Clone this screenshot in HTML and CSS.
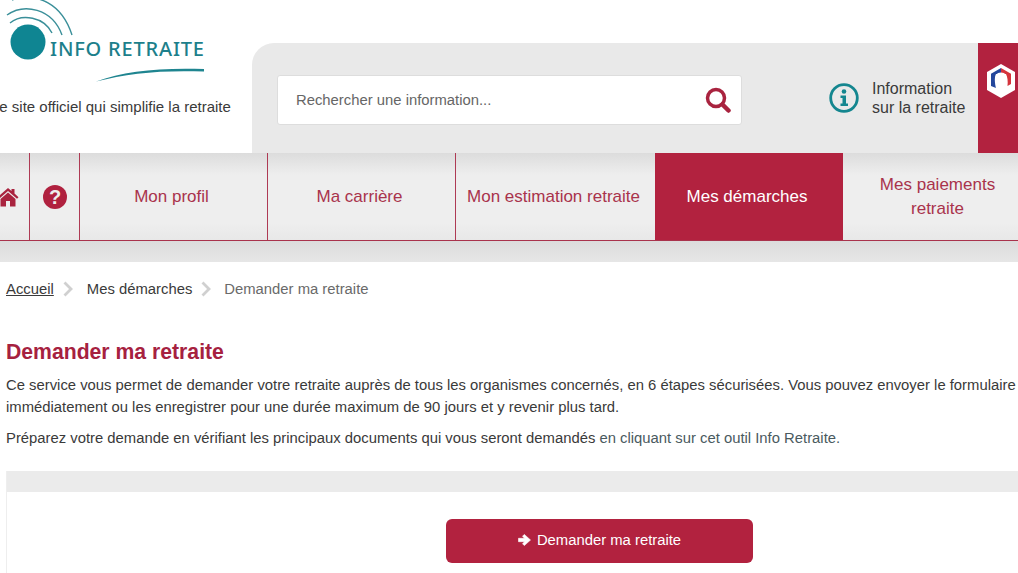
FILE: index.html
```html
<!DOCTYPE html>
<html lang="fr">
<head>
  <meta charset="UTF-8" />
  <meta name="viewport" content="width=device-width, initial-scale=1.0" />
  <title>Demander ma retraite</title>
  <link rel="stylesheet" href="styles.css">
</head>
<body>
  <header class="top">
    <div class="brand">
      <svg class="logo" width="210" height="86" viewBox="0 0 210 86">
        <circle cx="28" cy="42" r="17.500" fill="#0f8592"/>
        <path d="M10 23C22 13 44 17 52 33" fill="none" stroke="#3a8f99" stroke-width="1.400"/>
        <path d="M7 15C24 3 52 8 62 35" fill="none" stroke="#3a8f99" stroke-width="1.400"/>
        <path d="M12 0C38 -8 62 4 72 35" fill="none" stroke="#3a8f99" stroke-width="1.400"/>
        <text class="logo-text" x="50" y="56" textLength="154">INFO RETRAITE</text>
        <path d="M96 81.500C124 71 160 67.500 204 69L204 71.500C162 70 128 73 96 81.500Z" fill="#1f8590"/>
      </svg>
      <p class="tagline">Le site officiel qui simplifie la retraite</p>
    </div>
    <div class="panel">
      <div class="search">
        <span class="search-hint">Rechercher une information...</span>
        <svg width="26" height="26" viewBox="0 0 26 26">
          <circle cx="11" cy="11" r="8.500" fill="none" stroke="#a9233f" stroke-width="3.500"/>
          <path d="M17.500 17.500L23.500 23.500" stroke="#a9233f" stroke-width="4.500" stroke-linecap="round"/>
        </svg>
      </div>
      <div class="info">
        <svg width="30" height="30" viewBox="0 0 30 30">
          <circle cx="15" cy="15" r="13.300" fill="none" stroke="#14868f" stroke-width="2.800"/>
          <circle cx="15" cy="8.500" r="2.300" fill="#14868f"/>
          <path d="M11.500 12.500H17V20.500H19V23H11.500V20.500H13.500V15H11.500Z" fill="#14868f"/>
        </svg>
        <span>Information<br>sur la retraite</span>
      </div>
      <div class="account">
        <svg width="30" height="34" viewBox="0 0 30 34">
          <path d="M15 0L29 8V26L15 34L1 26V8Z" fill="#fff"/>
          <path d="M15 4L5 9.700V22L10 24C9 20 8 14 10 10H15Z" fill="#24479c"/>
          <path d="M15 4L25 9.700V20L21.500 22C22 17 21.500 13 20 10H15Z" fill="#d5343c"/>
          <path d="M15 8.500C19.500 8.500 21 12 20.500 16.500C20 19.500 18.500 21 19 23L22 25L15 29L8 25L11 23C11.500 21 10 19.500 9.500 16.500C9 12 10.500 8.500 15 8.500Z" fill="#fff"/>
        </svg>
      </div>
    </div>
  </header>

  <nav class="nav">
    <a class="nav-item nav-home">
      <svg width="22" height="20" viewBox="0 0 22 20">
        <path d="M11 1L14.500 4V2H17.500V6.600L21.500 10.200L20 11.800L11 4L2 11.800L.5 10.200Z" fill="#a9233f"/>
        <path d="M11 5.500L18.500 12V19.500H13V14H9V19.500H3.500V12Z" fill="#a9233f"/>
      </svg>
    </a>
    <a class="nav-item nav-help">
      <svg width="24" height="24" viewBox="0 0 24 24">
        <circle cx="12" cy="12" r="12" fill="#b0213f"/>
        <text class="help-mark" x="12" y="19">?</text>
      </svg>
    </a>
    <a class="nav-item nav-wide">Mon profil</a>
    <a class="nav-item nav-wide">Ma carrière</a>
    <a class="nav-item nav-estim">Mon estimation retraite</a>
    <a class="nav-item nav-wide active">Mes démarches</a>
    <a class="nav-item nav-pay">Mes paiements<br>retraite</a>
  </nav>
  <div class="strip"></div>

  <main class="content">
    <div class="crumbs">
      <a class="crumb-home">Accueil</a>
      <svg class="chev" width="12" height="16" viewBox="0 0 12 16"><path d="M2.500 1.500L9 8L2.500 14.500" fill="none" stroke="#d0d0d0" stroke-width="2.800"/></svg>
      <span class="crumb-mid">Mes démarches</span>
      <svg class="chev" width="12" height="16" viewBox="0 0 12 16"><path d="M2.500 1.500L9 8L2.500 14.500" fill="none" stroke="#d0d0d0" stroke-width="2.800"/></svg>
      <span class="crumb-last">Demander ma retraite</span>
    </div>

    <h1>Demander ma retraite</h1>
    <p class="intro">Ce service vous permet de demander votre retraite auprès de tous les organismes concernés, en 6 étapes sécurisées. Vous pouvez envoyer le formulaire immédiatement ou les enregistrer pour une durée maximum de 90 jours et y revenir plus tard.</p>
    <p class="intro second">Préparez votre demande en vérifiant les principaux documents qui vous seront demandés <a class="tool-link">en cliquant sur cet outil Info Retraite.</a></p>

    <section class="box">
      <div class="box-head"></div>
      <div class="box-body">
        <a class="btn">
          <svg width="14" height="14" viewBox="0 0 14 14"><path d="M.5 5.300H6.500L4.500 3.200L6.300 1.400L12.500 7L6.300 12.600L4.500 10.800L6.500 8.700H.5Z" fill="#fff" stroke="#fff" stroke-width=".6"/></svg>
          Demander ma retraite
        </a>
      </div>
    </section>
  </main>
</body>
</html>
```

FILE: styles.css
```css
html, body {
  height: 100%;
}
body {
  margin: 0;
  overflow: hidden;
  background: #fff;
  font-family: "Liberation Sans", Arial, sans-serif;
  font-size: 14.83px;
  color: #3a3a3a;
}
.top {
  display: flex;
  height: 153px;
}
.brand {
  width: 252px;
  flex: none;
}
.logo {
  display: block;
}
.logo-text {
  font-family: "Noto Sans", sans-serif;
  font-size: 20px;
  font-weight: 500;
  fill: #1d7f8b;
}
.tagline {
  margin: 12px 0 0 -9px;
  white-space: nowrap;
  font-size: 15px;
  line-height: 18px;
}
.panel {
  flex: 1;
  margin-top: 43px;
  display: flex;
  align-items: center;
  background: #e9e9e9;
  border-top-left-radius: 22px;
  padding-left: 25px;
}
.search {
  width: 465px;
  height: 50px;
  box-sizing: border-box;
  display: flex;
  align-items: center;
  justify-content: space-between;
  padding: 0 10px 0 18px;
  background: #fff;
  border: 1px solid #ddd;
  border-radius: 3px;
  margin-top: 4px;
}
.search-hint {
  color: #666;
}
.info {
  display: flex;
  align-items: center;
  gap: 13px;
  margin-left: 87px;
  width: 149px;
  flex: none;
  font-size: 16px;
  line-height: 19px;
}
.account {
  width: 40px;
  height: 100%;
  flex: none;
  background: #b2223f;
  box-sizing: border-box;
  padding: 21px 0 0 8px;
}
.nav {
  display: flex;
  height: 88px;
  margin-left: -20px;
  background: linear-gradient(#dcdcdc, #eeeeee 25%, #eeeeee 80%, #e8e8e8);
  border-bottom: 1px solid #a9334c;
  box-sizing: border-box;
}
.nav-item {
  flex: none;
  display: flex;
  align-items: center;
  justify-content: center;
  text-align: center;
  font-size: 17px;
  line-height: 24px;
  color: #a9334c;
  border-right: 1px solid #ae3a54;
  box-sizing: border-box;
  padding: 0 4px 0 0;
}
.nav-home {
  width: 50px;
  padding: 0 0 0 6px;
}
.nav-help {
  width: 50px;
  padding: 0;
}
.nav-wide {
  width: 188px;
}
.nav-estim {
  width: 199px;
  border-right: 0;
}
.active {
  background: #b2223f;
  color: #fff;
  border-right: 0;
}
.nav-pay {
  width: 187px;
  margin-left: 1px;
  border-right: 0;
  padding-right: 0;
}
.help-mark {
  font-size: 20px;
  font-weight: bold;
  fill: #eee;
  text-anchor: middle;
}
.strip {
  height: 21px;
  background: linear-gradient(#dcdcdc, #e6e6e6);
}
.content {
  padding: 0 0 0 6px;
}
.crumbs {
  display: flex;
  align-items: center;
  height: 53px;
  gap: 8px;
  white-space: nowrap;
}
.crumb-home {
  text-decoration: underline;
}
.crumb-mid {
  margin-left: 5px;
}
.crumb-last {
  margin-left: 4px;
  color: #6a6a6a;
}
.chev {
  flex: none;
}
h1 {
  margin: 25px 0 0;
  font-size: 21.2px;
  line-height: 24px;
  color: #a6213f;
}
.intro {
  margin: 10px 0 0;
  width: 1030px;
  line-height: 22px;
}
.second {
  margin-top: 9px;
}
.tool-link {
  color: #4a5a60;
}
.box {
  margin-top: 22px;
  border-left: 1px solid #eee;
}
.box-head {
  height: 21px;
  background: #ebebeb;
}
.box-body {
  height: 81px;
  box-sizing: border-box;
  padding: 27px 0 0 439px;
}
.btn {
  display: flex;
  align-items: center;
  justify-content: center;
  gap: 5px;
  width: 307px;
  height: 44px;
  box-sizing: border-box;
  padding-bottom: 2px;
  background: #b2223f;
  border-radius: 6px;
  color: #fff;
}
```
